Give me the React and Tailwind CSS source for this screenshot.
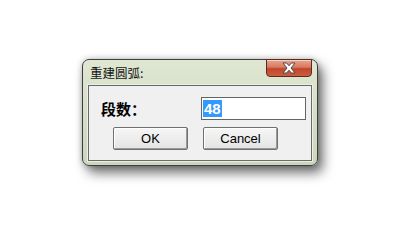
import React from "react";

const CJK = { fontFamily: '"Noto Sans CJK SC", "Noto Sans", sans-serif' };
const SANS = { fontFamily: '"Liberation Sans", Arial, sans-serif' };

function CloseX() {
  return (
    <svg width="16" height="12" viewBox="0 0 16 12">
      <path
        d="M2 1 L5.6 1 L8 3.8 L10.4 1 L14 1 L10 6 L14 11 L10.4 11 L8 8.2 L5.6 11 L2 11 L6 6 Z"
        fill="#ffffff"
        stroke="#4a4a4a"
        strokeWidth="1"
        strokeLinejoin="round"
      />
    </svg>
  );
}

function Btn({ children }) {
  return (
    <div className="w-[75px] h-[23px] border border-[#707070] rounded-[2px] bg-[linear-gradient(#f6f6f6,#e4e4e4)] shadow-[inset_-1px_-1px_0_#9a9a9a,inset_1px_1px_0_#ffffff] flex items-center justify-center text-[13px] text-black" style={SANS}>
      {children}
    </div>
  );
}

export default function App() {
  return (
    <div className="w-[399px] h-[216px] bg-white overflow-hidden pl-[82px] pt-[59px]">
      <div className="w-[236px] h-[107px] rounded-[7px] border border-[#3e3e3e] bg-[linear-gradient(#dfe7d3,#cbd6bc)] shadow-[5px_7px_12px_rgba(0,0,0,0.55),0_0_6px_rgba(0,0,0,0.25)] flex flex-col relative">
        <div className="h-[25px] flex items-start justify-between pl-[7px] pr-[5px]">
          <div className="text-[12.5px] leading-none mt-[7px] text-[#141414]" style={CJK}>重建圆弧:</div>
          <div className="w-[46px] h-[18px] -mt-[1px] rounded-b-[4px] border border-[#5a2a1e] bg-[linear-gradient(#e8a690_0%,#d8785e_45%,#c2442a_55%,#cc5e40_100%)] flex items-center justify-center shadow-[inset_0_1px_0_rgba(255,255,255,0.5)]">
            <CloseX />
          </div>
        </div>
        <div className="mx-[5px] h-[76px] border border-[#6a6a6a] bg-[#f0f0f0] shadow-[0_0_0_1px_#eaf0e2] flex flex-col">
          <div className="flex items-center mt-[11px] h-[23px]">
            <div className="ml-[12px] w-[100px] text-[15px] font-bold leading-none text-black" style={CJK}>段数：</div>
            <div className="w-[105px] h-[23px] border border-[#646464] bg-white flex items-center pl-[1px]">
              <span className="bg-[#3399ff] text-white text-[15px] font-bold leading-[17px] px-[1px]" style={SANS}>48</span>
            </div>
          </div>
          <div className="flex mt-[7px] pl-[24px] gap-[15px]">
            <Btn>OK</Btn>
            <Btn>Cancel</Btn>
          </div>
        </div>
      </div>
    </div>
  );
}
